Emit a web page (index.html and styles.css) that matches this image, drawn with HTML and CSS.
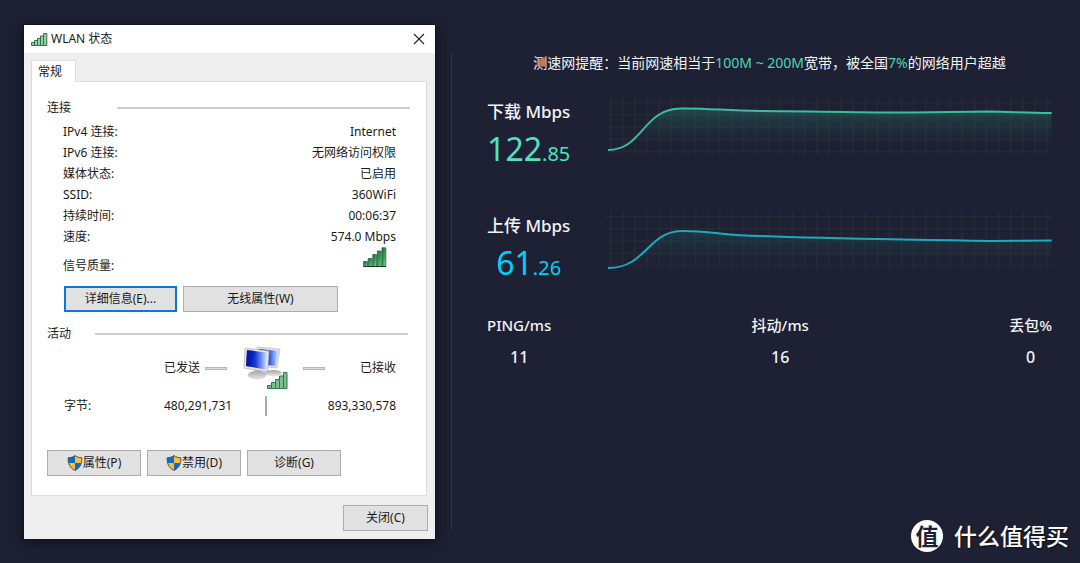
FILE: index.html
```html
<!DOCTYPE html>
<html lang="zh-CN">
<head>
<meta charset="utf-8">
<title>WLAN 状态</title>
<link rel="stylesheet" href="styles.css">
</head>
<body>
<svg class="defs" aria-hidden="true">
  <defs>
    <linearGradient id="bar" x1="0" y1="0" x2="1" y2="1"><stop offset="0" stop-color="#17662f"/><stop offset=".6" stop-color="#4f9f6d"/><stop offset="1" stop-color="#a5dcb5"/></linearGradient>
    <linearGradient id="screen" x1="0" y1="0" x2="1" y2="0"><stop offset="0" stop-color="#0617a0"/><stop offset=".45" stop-color="#1238d8"/><stop offset="1" stop-color="#c5dcff"/></linearGradient>
    <linearGradient id="stand" x1="0" y1="0" x2="0" y2="1"><stop offset="0" stop-color="#a5a5a5"/><stop offset="1" stop-color="#e6e6e6"/></linearGradient>
    <linearGradient id="down-fill" x1="0" y1="0" x2="0" y2="1"><stop offset="0" stop-color="#2fc09b" stop-opacity=".24"/><stop offset=".8" stop-color="#12806a" stop-opacity="0"/></linearGradient>
    <linearGradient id="up-fill" x1="0" y1="0" x2="0" y2="1"><stop offset="0" stop-color="#16a0a8" stop-opacity=".16"/><stop offset=".9" stop-color="#12806a" stop-opacity="0"/></linearGradient>
    <pattern id="grid" width="12.16" height="12.2" patternUnits="userSpaceOnUse" x="5" y="5">
      <path d="M.6 0V12.2M0 .6H12.16" stroke="#272b34" stroke-width="1.2"/>
    </pattern>
    <symbol id="shield" viewBox="0 0 16 16">
      <path d="M8 .6C6 2.1 3.600 2.800 1.200 2.800C1 8.500 2.500 12.800 8 15.400C13.500 12.800 15 8.500 14.800 2.800C12.400 2.800 10 2.100 8 .6Z" fill="#fbbd34"/>
      <path d="M8 .6C6 2.100 3.600 2.800 1.200 2.800C1.100 5 1.300 6.500 1.700 8H8ZM8 8V15.400C11.700 13.600 13.500 11 14.300 8Z" fill="#0c6ccb"/>
      <path d="M8 .6C6 2.100 3.600 2.800 1.200 2.800C1 8.500 2.500 12.800 8 15.400C13.500 12.800 15 8.500 14.800 2.800C12.400 2.800 10 2.100 8 .6Z" fill="none" stroke="#4b4f55" stroke-width="1"/>
    </symbol>
    <symbol id="bars" viewBox="0 0 24 20">
      <g fill="url(#bar)" stroke="#1f6a3a" stroke-width=".8">
        <path d="M.6 14.500H4.400V19.400H.6Z"/><path d="M5.200 11.500H9V19.400H5.200Z"/><path d="M9.800 7.500H13.600V19.400H9.800Z"/><path d="M14.400 4H18.200V19.400H14.400Z"/><path d="M19 .8H22.800V19.400H19Z"/>
      </g>
      <path d="M.4 19.500H23" stroke="#123d22"/>
    </symbol>
    <symbol id="bars-light" viewBox="0 0 17 13">
      <path d="M.5 9.500H3.500V12.500H.5ZM3.500 7.500H6.500V12.500H3.500ZM6.500 5.500H9.500V12.500H6.500ZM9.500 3H12.500V12.500H9.500ZM12.500 .5H15.800V12.500H12.500Z" fill="#8fd0a0" stroke="#35704a"/>
    </symbol>
  </defs>
</svg>

<main class="page">
  <section class="dialog" aria-label="WLAN 状态">
    <header class="titlebar">
      <svg class="title-icon"><use href="#bars-light"/></svg>
      <h1 class="title">WLAN 状态</h1>
      <button class="close" type="button" aria-label="关闭窗口"><svg viewBox="0 0 12 12" width="12" height="12"><path d="M1 1L11 11M11 1L1 11" stroke="#222" stroke-width="1.1"/></svg></button>
    </header>
    <div class="dialog-body">
      <button class="tab" type="button">常规</button>
      <div class="sheet">
        <h2 class="group"><span>连接</span></h2>
        <dl class="facts">
          <div class="fact"><dt>IPv4 连接:</dt><dd>Internet</dd></div>
          <div class="fact"><dt>IPv6 连接:</dt><dd>无网络访问权限</dd></div>
          <div class="fact"><dt>媒体状态:</dt><dd>已启用</dd></div>
          <div class="fact"><dt>SSID:</dt><dd>360WiFi</dd></div>
          <div class="fact"><dt>持续时间:</dt><dd>00:06:37</dd></div>
          <div class="fact"><dt>速度:</dt><dd>574.0 Mbps</dd></div>
          <div class="fact signal"><dt>信号质量:</dt><dd><svg class="signal-icon" role="img" aria-label="信号满格"><use href="#bars"/></svg></dd></div>
        </dl>
        <div class="actions detail-actions">
          <button class="btn primary" type="button">详细信息(E)...</button>
          <button class="btn wide" type="button">无线属性(W)</button>
        </div>
        <h2 class="group activity"><span>活动</span></h2>
        <div class="traffic">
          <span class="sent">已发送</span>
          <i class="dash dash-sent"></i>
          <svg class="computers" viewBox="0 0 46 44" aria-hidden="true">
            <ellipse cx="30" cy="27" rx="9" ry="3" fill="url(#stand)"/>
            <path d="M14 1L37 3L34 22L14 20Z" fill="#dfdfdf" stroke="#b5b5b5" stroke-width=".6"/>
            <path d="M16 3L35 5L32.500 20L16 18Z" fill="url(#screen)"/>
            <path d="M12 23L19 24L20 29H12Z" fill="#9d9d9d"/>
            <ellipse cx="14" cy="29" rx="9" ry="4" fill="url(#stand)" stroke="#c4c4c4" stroke-width=".5"/>
            <path d="M2 2L26 5L24.500 26L1 22Z" fill="#e4e4e4" stroke="#b2b2b2" stroke-width=".7"/>
            <path d="M4 4L23.500 6.500L22.500 23.500L3 20Z" fill="url(#screen)"/>
            <path d="M4 4L12 5L7 20.700L3 20Z" fill="#0714a0" opacity=".5"/>
            <g fill="#7fbd90" stroke="#2c7a48"><path d="M24.500 39.500H28.500V42.500H24.500ZM28.500 36.500H32.500V42.500H28.500ZM32.500 33.500H36.500V42.500H32.500ZM36.500 30H40.500V42.500H36.500ZM40.500 26.500H44V42.500H40.500Z"/></g>
          </svg>
          <i class="dash dash-received"></i>
          <span class="received">已接收</span>
          <span class="bytes-label">字节:</span>
          <span class="bytes-sent">480,291,731</span>
          <i class="bytes-split"></i>
          <span class="bytes-received">893,330,578</span>
        </div>
        <div class="actions">
          <button class="btn" type="button"><svg class="shield"><use href="#shield"/></svg>属性(P)</button>
          <button class="btn" type="button"><svg class="shield"><use href="#shield"/></svg>禁用(D)</button>
          <button class="btn" type="button">诊断(G)</button>
        </div>
      </div>
      <div class="footer"><button class="btn footer-close" type="button">关闭(C)</button></div>
    </div>
  </section>

  <section class="speed" aria-label="测速结果">
    <p class="notice">测速网提醒：当前网速相当于<b>100M ~ 200M</b>宽带，被全国<b>7%</b>的网络用户超越</p>
    <div class="meter">
      <div class="reading">
        <h2 class="label">下载 Mbps</h2>
        <p class="value down">122<small>.85</small></p>
      </div>
      <svg class="chart" viewBox="0 0 448 58" preserveAspectRatio="none" role="img" aria-label="下载速度曲线">
        <rect width="448" height="58" fill="url(#grid)"/>
        <path d="M3 53C38 53 38 11.500 76 11.500C106 11 120 14 156 14C230 14.500 280 16 310 15.500C350 15 370 14.500 386 14.500C410 15 425 16 448 16V54H3Z" fill="url(#down-fill)"/>
        <path d="M3 53C38 53 38 11.500 76 11.500C106 11 120 14 156 14C230 14.500 280 16 310 15.500C350 15 370 14.500 386 14.500C410 15 425 16 448 16" fill="none" stroke="#3dbd9f" stroke-width="2"/>
      </svg>
    </div>
    <div class="meter">
      <div class="reading">
        <h2 class="label">上传 Mbps</h2>
        <p class="value up">61<small>.26</small></p>
      </div>
      <svg class="chart" viewBox="0 0 448 58" preserveAspectRatio="none" role="img" aria-label="上传速度曲线">
        <rect width="448" height="58" fill="url(#grid)"/>
        <path d="M3 57C42 57 42 20 78 20C108 20 120 25 156 25C230 28 290 28 386 30C410 30 425 29.500 448 29.500V57H3Z" fill="url(#up-fill)"/>
        <path d="M3 57C42 57 42 20 78 20C108 20 120 25 156 25C230 28 290 28 386 30C410 30 425 29.500 448 29.500" fill="none" stroke="#1fa9bf" stroke-width="2"/>
      </svg>
    </div>
    <dl class="stats">
      <div><dt>PING/ms</dt><dd>11</dd></div>
      <div><dt>抖动/ms</dt><dd>16</dd></div>
      <div><dt>丢包%</dt><dd>0</dd></div>
    </dl>
  </section>
</main>
<div class="watermark"><span class="mark">值</span><span>什么值得买</span></div>
</body>
</html>
```
FILE: styles.css
```css
* { box-sizing: border-box; }

body {
  margin: 0;
  background: #1e2133;
  color: #f2f3f5;
  font-family: "Noto Sans", "Noto Sans CJK SC", sans-serif;
}

h1, h2, p, dl, dd { margin: 0; font-weight: 400; }
button { font: inherit; color: inherit; padding: 0; }
svg { display: block; flex: none; }
.defs { position: absolute; width: 0; height: 0; }

.page {
  display: flex;
  gap: 16px;
  min-height: 100vh;
  padding: 25px 28px 24px 24px;
}

/* Status dialog */
.dialog {
  flex: 0 0 411px;
  align-self: flex-start;
  background: #efefef;
  color: #1a1a1a;
  font-size: 12px;
  line-height: 20px;
  box-shadow: 0 0 0 1px #11131f, 0 3px 12px #0c0e18;
}

.titlebar {
  display: flex;
  align-items: center;
  gap: 3px;
  height: 28px;
  padding: 0 10px 0 7px;
  background: #fff;
}
.title-icon { width: 17px; height: 13px; }
.title { flex: 1; font-size: 12px; }
.close { display: grid; border: 0; background: none; }

.dialog-body { padding: 7px 8px 8px 7px; }

.tab {
  position: relative;
  display: block;
  width: 45px;
  height: 22px;
  margin-bottom: -1px;
  border: 1px solid #dcdcdc;
  border-bottom: 0;
  background: #fff;
  text-align: left;
  padding-left: 6px;
}

.sheet {
  padding: 16px 16px 19px 15px;
  border: 1px solid #dcdcdc;
  background: #fff;
}

.group {
  display: flex;
  gap: 46px;
  align-items: center;
  font-size: 12px;
  line-height: 20px;
}
.group::after { content: ""; flex: 1; height: 2px; background: #ccc; }
.activity { gap: 24px; margin-top: 12px; padding-right: 2px; }

.facts { padding: 3px 14px 0 16px; }
.fact { display: flex; justify-content: space-between; line-height: 21px; }
.signal { height: 36px; align-items: center; }
.signal dd { align-self: flex-start; padding-right: 9px; }
.signal-icon { width: 24px; height: 20px; }

.actions { display: flex; gap: 6px; }
.detail-actions { padding-left: 17px; margin-top: 3px; }

.btn {
  display: flex;
  align-items: center;
  justify-content: center;
  width: 94px;
  height: 26px;
  border: 1px solid #adadad;
  background: #e1e1e1;
}
.primary { width: 113px; border: 2px solid #0b78d7; }
.wide { width: 155px; }
.shield { width: 16px; height: 16px; }

.traffic {
  display: grid;
  grid-template-columns: 141px 22px 16px 46px 14px 22px 1fr;
  grid-template-rows: 48px 28px;
  align-items: center;
  padding: 0 14px 0 17px;
  margin-bottom: 30px;
}
.sent { grid-column: 1; padding-left: 100px; white-space: nowrap; }
.dash { height: 3px; border: 1px solid #b5b5b5; background: #ddd; }
.dash-sent { grid-column: 2; }
.computers { grid-column: 4; width: 46px; height: 44px; }
.dash-received { grid-column: 6; }
.received { grid-column: 7; text-align: right; }
.bytes-label, .bytes-sent { grid-row: 2; }
.bytes-label { grid-column: 1; }
.bytes-sent { grid-column: 1 / 4; padding-left: 100px; }
.bytes-split { grid-column: 4; width: 2px; height: 20px; margin-left: 22px; background: #aaa; }
.bytes-received { grid-column: 5 / 8; text-align: right; }

.footer { display: flex; justify-content: flex-end; padding-top: 9px; }
.footer .footer-close { width: 85px; margin-right: -1px; }

/* Speed test */
.speed {
  flex: 1;
  min-width: 0;
  margin: 27px 0 9px;
  padding-left: 35px;
  border-left: 1px solid #30333f;
}
.notice {
  margin-bottom: 23px;
  font-size: 14px;
  line-height: 22px;
  text-align: center;
}
.notice b { color: #4bd8b5; font-weight: 400; }

.meter { display: flex; gap: 35px; height: 76px; margin-bottom: 38px; }
.reading { flex: 0 0 82px; white-space: nowrap; }
.label { font-size: 17px; font-weight: 500; line-height: 30px; }
.value { font-size: 32px; line-height: 44px; text-align: center; }
.value small { font-size: 20px; }
.down { color: #50e3c2; }
.up { color: #00d0fa; }
.chart { flex: 1; min-width: 0; height: 58px; }

.stats {
  display: flex;
  justify-content: space-between;
  margin-top: -16px;
  font-size: 15px;
  font-weight: 500;
  line-height: 32px;
  text-align: center;
}
.stats dd { font-size: 16px; font-weight: 500; }

.watermark {
  position: absolute;
  right: 11px;
  bottom: 11px;
  display: flex;
  align-items: center;
  gap: 11px;
  color: #fff;
  font-size: 23px;
  font-weight: 500;
  line-height: 32px;
  text-shadow: 1px 1px 2px #0b0d16;
}
.mark {
  width: 32px;
  border-radius: 50%;
  background: #fff;
  color: #1e2133;
  font-weight: 700;
  text-align: center;
  text-shadow: none;
}
```
